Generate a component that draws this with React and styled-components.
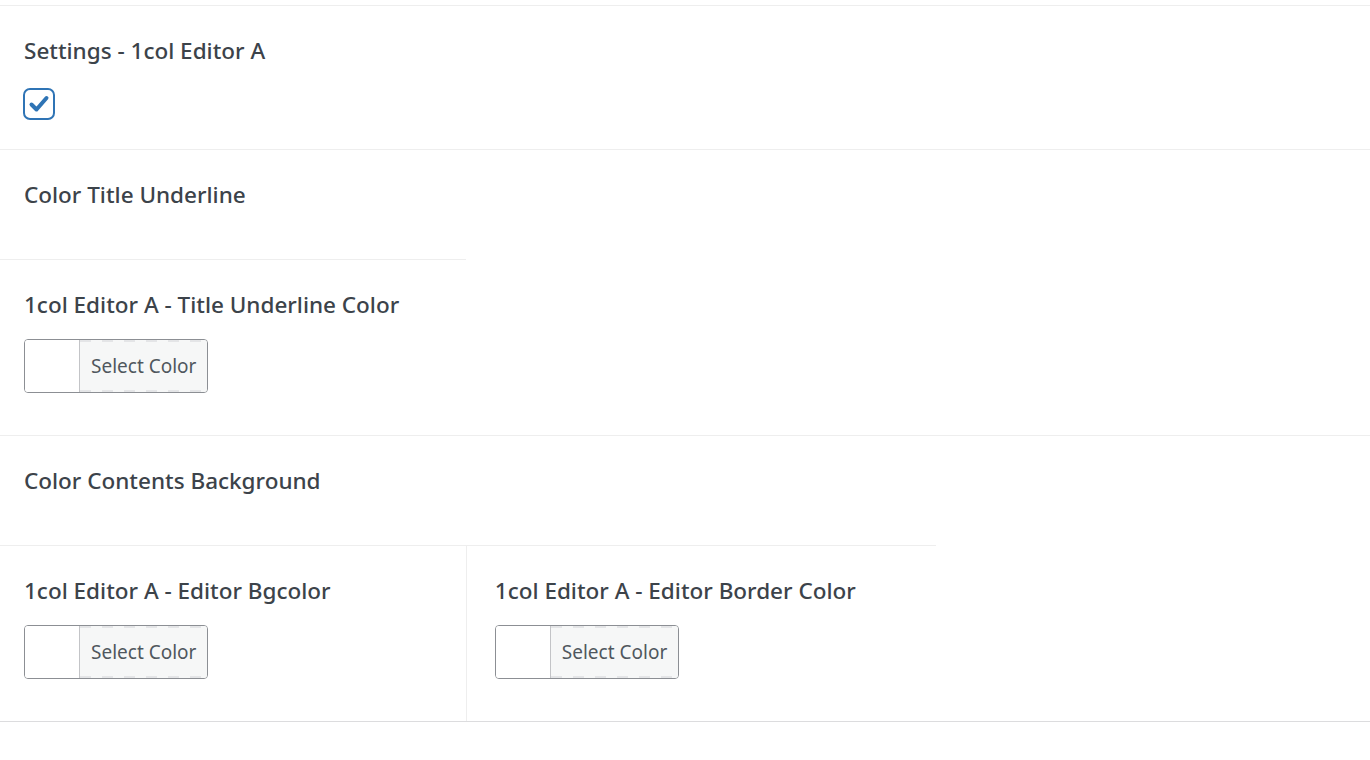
import React from "react";
import styled, { createGlobalStyle } from "styled-components";

const GlobalStyle = createGlobalStyle`
  body {
    margin: 0;
    background: #fff;
    font-family: "Noto Sans", "Open Sans", sans-serif;
    color: #3c434a;
  }
`;

const Fields = styled.div`
  display: flex;
  flex-wrap: wrap;
  margin-top: 5px;
  border-top: 1px solid #eeeeee;
  border-bottom: 1px solid #dcdcde;
`;

const Field = styled.div`
  display: flex;
  flex-direction: column;
  align-items: flex-start;
  box-sizing: border-box;
  width: ${(props) => props.$width || "100%"};
  padding: 31px 24px 30px ${(props) => (props.$left ? "28px" : "24px")};
  border-bottom: ${(props) => (props.$bottom ? "1px solid #eeeeee" : "none")};
  border-left: ${(props) => (props.$left ? "1px solid #eeeeee" : "none")};
`;

const Label = styled.label`
  display: block;
  font-size: 22.5px;
  font-weight: 500;
  line-height: 28px;
  margin-bottom: 20px;
  color: #3c434a;
  white-space: nowrap;
`;

const CheckBox = styled.span`
  display: flex;
  align-items: center;
  justify-content: center;
  box-sizing: border-box;
  width: 32px;
  height: 32px;
  margin: 3px 0 -1px -1px;
  border: 2.5px solid #2f74b5;
  border-radius: 7px;
  background: #fff;
`;

const Picker = styled.div`
  display: inline-flex;
  height: 54px;
  margin-bottom: 12px;
  border: 1px solid #8c8f94;
  border-radius: 4px;
  overflow: hidden;
  box-sizing: border-box;
`;

const Swatch = styled.span`
  width: 54px;
  background: #fff;
  border-right: 1px solid #c3c4c7;
`;

const PickerText = styled.span`
  display: flex;
  align-items: center;
  padding: 0 11px;
  font-size: 19px;
  color: #50575e;
  background:
    repeating-linear-gradient(90deg, #e4e5e7 0 11px, transparent 11px 22px) top / 100% 2px no-repeat,
    repeating-linear-gradient(90deg, #e4e5e7 0 11px, transparent 11px 22px) bottom / 100% 2px no-repeat,
    #f6f7f7;
`;

const ColorPicker = () => (
  <Picker>
    <Swatch />
    <PickerText>Select Color</PickerText>
  </Picker>
);

const App = () => {
  return (
    <>
      <GlobalStyle />
      <Fields>
        <Field $bottom>
          <Label>Settings - 1col Editor A</Label>
          <CheckBox>
            <svg width="22" height="22" viewBox="0 0 22 22">
              <path
                d="M3.5 11.5 L8.5 16.5 L18.5 5"
                fill="none"
                stroke="#2f74b5"
                strokeWidth="4"
                strokeLinecap="round"
                strokeLinejoin="round"
              />
            </svg>
          </CheckBox>
        </Field>
        <Field $bottom $width="34%">
          <Label>Color Title Underline</Label>
        </Field>
        <Field $bottom>
          <Label>1col Editor A - Title Underline Color</Label>
          <ColorPicker />
        </Field>
        <Field $bottom $width="68.3%">
          <Label>Color Contents Background</Label>
        </Field>
        <Field $width="34%">
          <Label>1col Editor A - Editor Bgcolor</Label>
          <ColorPicker />
        </Field>
        <Field $left $width="34.3%">
          <Label>1col Editor A - Editor Border Color</Label>
          <ColorPicker />
        </Field>
      </Fields>
    </>
  );
};

export default App;
